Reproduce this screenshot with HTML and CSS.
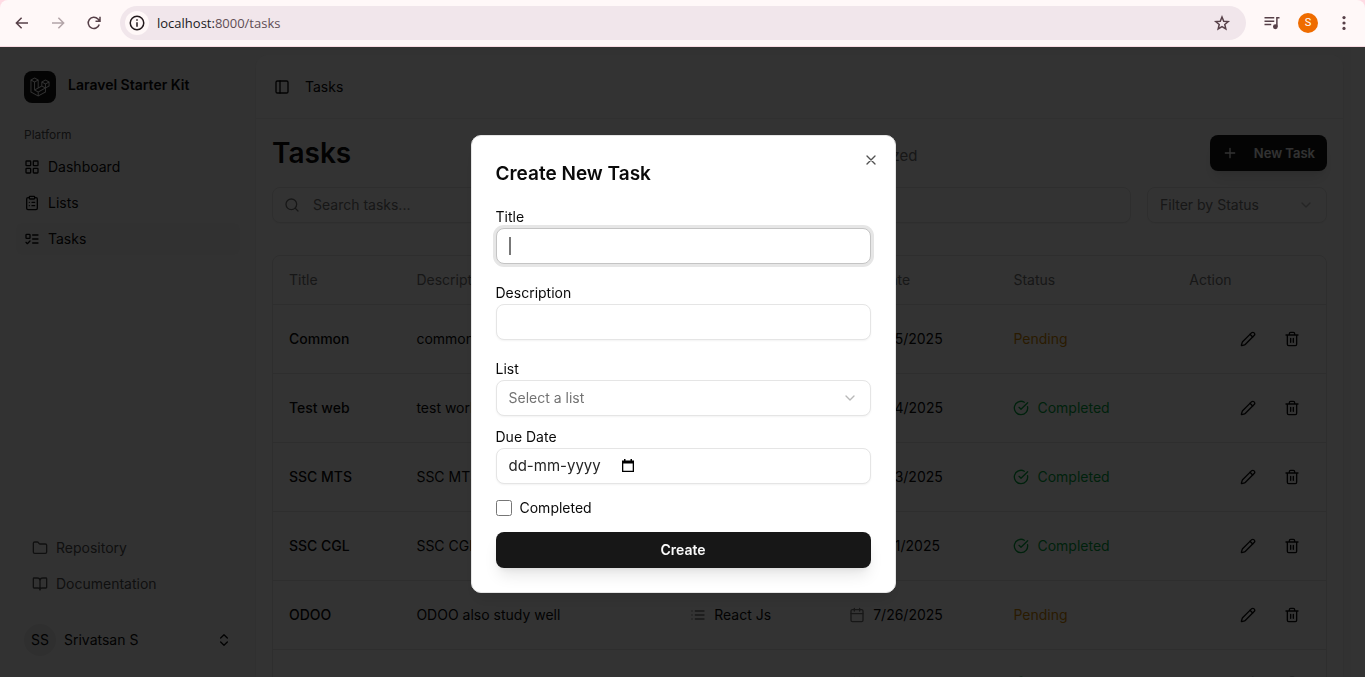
FILE: index.html
```html
<!DOCTYPE html>
<html lang="en">
<head>
<meta charset="utf-8">
<title>Tasks</title>
<link rel="stylesheet" href="styles.css">
</head>
<body>
<svg class="sprite" aria-hidden="true">
  <symbol id="pencil" viewBox="0 0 24 24"><path d="M21.174 6.812a1 1 0 0 0-3.986-3.987L3.842 16.174a2 2 0 0 0-.5.83l-1.321 4.352a.5.5 0 0 0 .623.622l4.353-1.32a2 2 0 0 0 .83-.497z"/><path d="m15 5 4 4"/></symbol>
  <symbol id="trash" viewBox="0 0 24 24"><path d="M3 6h18M19 6v14a2 2 0 0 1-2 2H7a2 2 0 0 1-2-2V6M8 6V4a2 2 0 0 1 2-2h4a2 2 0 0 1 2 2v2M10 11v6M14 11v6"/></symbol>
  <symbol id="list" viewBox="0 0 24 24"><path d="M3 12h.01M3 18h.01M3 6h.01M8 12h13M8 18h13M8 6h13"/></symbol>
  <symbol id="calendar" viewBox="0 0 24 24"><path d="M8 2v4M16 2v4M3 10h18"/><rect width="18" height="18" x="3" y="4" rx="2"/></symbol>
  <symbol id="check" viewBox="0 0 24 24"><path d="M21.801 10A10 10 0 1 1 17 3.335"/><path d="m9 11 3 3L22 4"/></symbol>
  <symbol id="chevron" viewBox="0 0 24 24"><path d="m6 9 6 6 6-6"/></symbol>
</svg>

<header class="browser">
  <div class="toolbar">
    <button class="tool" aria-label="Back"><svg class="bicon" viewBox="0 0 24 24"><path d="M20 12H5M11.500 5 4.500 12l7 7"/></svg></button>
    <button class="tool disabled" aria-label="Forward"><svg class="bicon" viewBox="0 0 24 24"><path d="M4 12h15M12.500 5l7 7-7 7"/></svg></button>
    <button class="tool" aria-label="Reload"><svg class="bicon" viewBox="0 0 24 24"><path d="M19 14a7.500 7.500 0 1 1-1.700-7.300L20 9.500M20 3.500v6h-6"/></svg></button>
    <div class="omnibox">
      <button class="siteinfo" aria-label="Site information"><svg class="bicon" viewBox="0 0 24 24"><circle cx="12" cy="12" r="9"/><path d="M12 11v6M12 7v2"/></svg></button>
      <span class="url"><b>localhost:</b>8000/tasks</span>
      <button class="tool" aria-label="Bookmark"><svg class="bicon" viewBox="0 0 24 24"><path d="m12 4 2.300 5.600 6 .5-4.600 3.900 1.400 5.900L12 16.800l-5.100 3.100 1.400-5.900-4.600-3.900 6-.5z"/></svg></button>
    </div>
    <button class="tool" aria-label="Media"><svg class="bicon" viewBox="0 0 24 24"><path d="M2 5h13M2 9.500h13M2 14h9M18.500 17V5H22"/><circle class="solid" cx="16.500" cy="17" r="2.200"/></svg></button>
    <button class="profile" aria-label="Profile">S</button>
    <button class="tool" aria-label="Menu"><svg class="dots" viewBox="0 0 20 20"><circle cx="10" cy="4" r="1.800"/><circle cx="10" cy="10" r="1.800"/><circle cx="10" cy="16" r="1.800"/></svg></button>
  </div>
</header>

<div class="page">
  <aside class="sidebar">
    <a class="brand" href="#">
      <span class="logo"><svg viewBox="0 0 40 42"><path fill-rule="evenodd" d="M17.2 5.633 8.6.855 0 5.633v26.51l16.2 9 16.2-9v-8.442l7.6-4.223V9.856l-8.6-4.777-8.6 4.777V18.3l-5.6 3.111V5.633ZM38 18.301l-5.6 3.11v-6.157l5.6-3.11V18.3Zm-1.06-7.856-5.54 3.078-5.54-3.079 5.54-3.078 5.54 3.079ZM24.8 18.3v-6.157l5.6 3.111v6.158L24.8 18.3Zm-1 1.732 5.54 3.078-13.14 7.302-5.54-3.078 13.14-7.3v-.002Zm-16.2 7.89 7.6 4.222V38.3L2 30.966V7.92l5.6 3.111v16.892ZM8.6 9.3 3.06 6.222 8.6 3.143l5.54 3.08L8.6 9.3Zm21.8 15.51-13.2 7.334V38.3l13.2-7.334v-6.156ZM9.6 11.034l5.6-3.11v14.6l-5.6 3.11v-14.6Z"/></svg></span>
      <span class="brandname">Laravel Starter Kit</span>
    </a>
    <p class="group">Platform</p>
    <nav class="nav">
      <a href="#"><svg class="icon" viewBox="0 0 24 24"><rect width="7" height="7" x="3" y="3" rx="1"/><rect width="7" height="7" x="14" y="3" rx="1"/><rect width="7" height="7" x="14" y="14" rx="1"/><rect width="7" height="7" x="3" y="14" rx="1"/></svg>Dashboard</a>
      <a href="#"><svg class="icon" viewBox="0 0 24 24"><rect width="8" height="4" x="8" y="2" rx="1"/><path d="M16 4h2a2 2 0 0 1 2 2v14a2 2 0 0 1-2 2H6a2 2 0 0 1-2-2V6a2 2 0 0 1 2-2h2M12 11h4M12 16h4M8 11h.01M8 16h.01"/></svg>Lists</a>
      <a class="active" href="#"><svg class="icon" viewBox="0 0 24 24"><rect x="3" y="5" width="6" height="6" rx="1"/><path d="m3 17 2 2 4-4M13 6h8M13 12h8M13 18h8"/></svg>Tasks</a>
    </nav>
    <nav class="nav links">
      <a href="#"><svg class="icon" viewBox="0 0 24 24"><path d="M20 20a2 2 0 0 0 2-2V8a2 2 0 0 0-2-2h-7.900a2 2 0 0 1-1.690-.9L9.600 3.900A2 2 0 0 0 7.930 3H4a2 2 0 0 0-2 2v13a2 2 0 0 0 2 2Z"/></svg>Repository</a>
      <a href="#"><svg class="icon" viewBox="0 0 24 24"><path d="M12 7v14M3 18a1 1 0 0 1-1-1V4a1 1 0 0 1 1-1h5a4 4 0 0 1 4 4 4 4 0 0 1 4-4h5a1 1 0 0 1 1 1v13a1 1 0 0 1-1 1h-6a3 3 0 0 0-3 3 3 3 0 0 0-3-3z"/></svg>Documentation</a>
    </nav>
    <button class="user"><span class="avatar">SS</span><span class="username">Srivatsan S</span><svg class="icon" viewBox="0 0 24 24"><path d="m7 15 5 5 5-5M7 9l5-5 5 5"/></svg></button>
  </aside>

  <main class="main">
    <div class="crumbs">
      <button class="plain" aria-label="Toggle sidebar"><svg class="icon" viewBox="0 0 24 24"><rect width="18" height="18" x="3" y="3" rx="2"/><path d="M9 3v18"/></svg></button>
      <span>Tasks</span>
    </div>
    <div class="content">
      <div class="heading">
        <h1>Tasks</h1>
        <p>Manage your tasks and stay organized</p>
        <button class="primary new"><svg class="icon" viewBox="0 0 24 24"><path d="M5 12h14M12 5v14"/></svg>New Task</button>
      </div>
      <div class="filters">
        <label class="search"><svg class="icon" viewBox="0 0 24 24"><circle cx="11" cy="11" r="8"/><path d="m21 21-4.300-4.300"/></svg><input type="search" placeholder="Search tasks..." aria-label="Search tasks"></label>
        <div class="selectbox status-filter"><select aria-label="Filter by Status"><option>Filter by Status</option></select><svg class="icon faint"><use href="#chevron"/></svg></div>
      </div>
      <div class="tablebox">
        <table>
          <colgroup><col class="c-title"><col class="c-desc"><col class="c-list"><col class="c-due"><col class="c-status"><col class="c-action"></colgroup>
          <thead><tr><th>Title</th><th>Description</th><th>List</th><th>Due Date</th><th>Status</th><th>Action</th></tr></thead>
          <tbody>
            <tr><td class="name">Common</td><td>common</td><td></td><td><span class="cell"><svg class="icon muted"><use href="#calendar"/></svg>7/25/2025</span></td><td><span class="pending">Pending</span></td><td><span class="actions"><button class="plain" aria-label="Edit"><svg class="icon"><use href="#pencil"/></svg></button><button class="plain" aria-label="Delete"><svg class="icon"><use href="#trash"/></svg></button></span></td></tr>
            <tr><td class="name">Test web</td><td>test work</td><td></td><td><span class="cell"><svg class="icon muted"><use href="#calendar"/></svg>7/24/2025</span></td><td><span class="cell done"><svg class="icon"><use href="#check"/></svg>Completed</span></td><td><span class="actions"><button class="plain" aria-label="Edit"><svg class="icon"><use href="#pencil"/></svg></button><button class="plain" aria-label="Delete"><svg class="icon"><use href="#trash"/></svg></button></span></td></tr>
            <tr><td class="name">SSC MTS</td><td>SSC MTS</td><td></td><td><span class="cell"><svg class="icon muted"><use href="#calendar"/></svg>7/23/2025</span></td><td><span class="cell done"><svg class="icon"><use href="#check"/></svg>Completed</span></td><td><span class="actions"><button class="plain" aria-label="Edit"><svg class="icon"><use href="#pencil"/></svg></button><button class="plain" aria-label="Delete"><svg class="icon"><use href="#trash"/></svg></button></span></td></tr>
            <tr><td class="name">SSC CGL</td><td>SSC CGL</td><td></td><td><span class="cell"><svg class="icon muted"><use href="#calendar"/></svg>7/31/2025</span></td><td><span class="cell done"><svg class="icon"><use href="#check"/></svg>Completed</span></td><td><span class="actions"><button class="plain" aria-label="Edit"><svg class="icon"><use href="#pencil"/></svg></button><button class="plain" aria-label="Delete"><svg class="icon"><use href="#trash"/></svg></button></span></td></tr>
            <tr><td class="name">ODOO</td><td>ODOO also study well</td><td><span class="cell"><svg class="icon muted"><use href="#list"/></svg>React Js</span></td><td><span class="cell"><svg class="icon muted"><use href="#calendar"/></svg>7/26/2025</span></td><td><span class="pending">Pending</span></td><td><span class="actions"><button class="plain" aria-label="Edit"><svg class="icon"><use href="#pencil"/></svg></button><button class="plain" aria-label="Delete"><svg class="icon"><use href="#trash"/></svg></button></span></td></tr>
            <tr><td></td><td></td><td></td><td><span class="cell"><svg class="icon muted"><use href="#calendar"/></svg></span></td><td><span class="cell done"><svg class="icon"><use href="#check"/></svg></span></td><td><span class="actions"><button class="plain" aria-label="Edit"><svg class="icon"><use href="#pencil"/></svg></button><button class="plain" aria-label="Delete"><svg class="icon"><use href="#trash"/></svg></button></span></td></tr>
          </tbody>
        </table>
      </div>
    </div>
  </main>
  <div class="gutter"></div>
</div>

<div class="overlay">
  <section class="dialog" role="dialog" aria-labelledby="dialog-title">
    <h2 id="dialog-title">Create New Task</h2>
    <button class="plain close" aria-label="Close"><svg class="icon" viewBox="0 0 24 24"><path d="M18 6 6 18M6 6l12 12"/></svg></button>
    <form>
      <div class="field roomy"><label for="title">Title</label><input class="control focused" id="title" type="text"></div>
      <div class="field roomy"><label for="description">Description</label><input class="control" id="description" type="text"></div>
      <div class="field"><label for="list">List</label><div class="selectbox"><select id="list"><option>Select a list</option></select><svg class="icon faint"><use href="#chevron"/></svg></div></div>
      <div class="field"><label for="due">Due Date</label><div class="control date"><input id="due" type="text" placeholder="dd-mm-yyyy" size="9"><button class="plain" type="button" aria-label="Open calendar"><svg class="picker" viewBox="0 0 14 14"><path fill-rule="evenodd" d="M3 0h1.500v1.500h5V0H11v1.500h2V13H1V1.500h2zM2.300 4.500v7.200h9.400V4.500z"/></svg></button></div></div>
      <div class="checkrow"><input id="completed" type="checkbox"><label for="completed">Completed</label></div>
      <button class="primary" type="button">Create</button>
    </form>
  </section>
</div>
</body>
</html>
```
FILE: styles.css
```css
* { box-sizing: border-box; }
body {
  margin: 0;
  height: 100vh;
  display: flex;
  flex-direction: column;
  overflow: hidden;
  font-family: Inter, "Liberation Sans", sans-serif;
  font-size: 14px;
  line-height: 20px;
  color: #0a0a0a;
}
h1, h2, p { margin: 0; }
a { color: inherit; text-decoration: none; }
button, input, select { font: inherit; color: inherit; }
button { border: 0; padding: 0; background: none; }
.sprite { display: none; }
.icon {
  width: 16px;
  height: 16px;
  flex: none;
  fill: none;
  stroke: currentColor;
  stroke-width: 2;
  stroke-linecap: round;
  stroke-linejoin: round;
}
.muted { color: #737373; }
.faint { opacity: 0.5; }
.plain { display: flex; }

/* Browser toolbar */
.browser { flex: none; background: #ffdbe4; border-bottom: 1px solid #f8dbe2; }
.toolbar {
  display: flex;
  align-items: center;
  gap: 16px;
  height: 46px;
  padding: 0 11px 0 12px;
  background: #fff8f8;
  border-radius: 8px 8px 0 0;
  color: #574048;
}
.tool { display: flex; justify-content: center; width: 20px; flex: none; }
.disabled { opacity: 0.45; }
.bicon {
  width: 18px;
  height: 18px;
  fill: none;
  stroke: currentColor;
  stroke-width: 2;
}
.solid { fill: currentColor; }
.dots { width: 18px; height: 18px; fill: currentColor; }
.omnibox {
  flex: 1;
  display: flex;
  align-items: center;
  gap: 8px;
  height: 34px;
  padding: 0 14px 0 5px;
  border-radius: 17px;
  background: #f1e6eb;
}
.siteinfo {
  display: flex;
  align-items: center;
  justify-content: center;
  width: 24px;
  height: 24px;
  border-radius: 50%;
  background: #fff8f8;
  color: #22191c;
}
.url { flex: 1; font-family: "Open Sans", sans-serif; font-size: 13px; color: #604d54; }
.url b { font-weight: 400; color: #201a1c; }
.profile {
  width: 20px;
  height: 20px;
  border-radius: 50%;
  background: #ef6c00;
  color: #fff;
  font-family: Roboto, sans-serif;
  font-size: 11px;
}

/* App shell */
.page { flex: 1; min-height: 0; display: flex; background: #fafafa; }
.sidebar {
  flex: none;
  width: 256px;
  padding: 16px;
  display: flex;
  flex-direction: column;
}
.brand { display: flex; gap: 12px; padding: 8px; }
.logo {
  display: flex;
  align-items: center;
  justify-content: center;
  width: 32px;
  height: 32px;
  border-radius: 8px;
  background: #171717;
}
.logo svg { width: 20px; height: 20px; fill: #fff; }
.brandname { font-weight: 600; font-size: 14px; line-height: 28px; white-space: nowrap; }
.group {
  padding: 0 8px;
  margin-top: 8px;
  line-height: 32px;
  font-size: 12px;
  color: #505050;
}
.nav { display: flex; flex-direction: column; gap: 4px; }
.nav a {
  display: flex;
  align-items: center;
  gap: 8px;
  height: 32px;
  padding: 0 8px;
  border-radius: 6px;
}
.nav .active { background: #f5f5f5; }
.links { margin-top: auto; padding: 0 8px; color: #525252; }
.user {
  display: flex;
  align-items: center;
  gap: 8px;
  height: 48px;
  margin: 16px 0 -3px;
  padding: 0 8px;
  text-align: left;
}
.avatar {
  width: 32px;
  line-height: 32px;
  border-radius: 50%;
  background: #eaeaea;
  text-align: center;
}
.username { flex: 1; }
.main {
  flex: 1;
  min-width: 0;
  margin: 8px 8px 0 0;
  overflow: hidden;
  background: #fff;
  border-radius: 12px 12px 0 0;
  box-shadow: 0 1px 3px #0000001a;
}
.gutter { flex: none; width: 14px; background: #fcfcfc; }
.crumbs {
  display: flex;
  align-items: center;
  gap: 15px;
  height: 64px;
  padding: 0 18px;
  border-bottom: 1px solid #ededed;
}
.content { padding: 16px; }
.heading { display: flex; justify-content: space-between; height: 36px; }
.heading h1 { font-size: 28px; line-height: 36px; font-weight: 600; }
.heading p { font-size: 15px; line-height: 42px; color: #737373; }
.primary {
  height: 36px;
  border-radius: 8px;
  background: #171717;
  color: #fafafa;
  font-weight: 600;
  box-shadow: 0 10px 15px -3px #0000001a, 0 4px 6px -4px #0000001a;
}
.new { display: flex; align-items: center; gap: 16px; padding: 0 12px; font-size: 13px; }
.filters { display: flex; gap: 16px; margin: 16px 0 32px; }
.search, .control, .selectbox {
  height: 36px;
  border: 1px solid #e5e5e5;
  border-radius: 8px;
  background: #fff;
  box-shadow: 0 1px 2px #0000000d;
}
.search { flex: 1; display: flex; align-items: center; gap: 13px; padding: 0 11px; color: #737373; }
.search input { flex: 1; border: 0; padding: 0; outline: 0; background: none; }
input::placeholder { color: #737373; opacity: 1; }
.selectbox { display: grid; align-items: center; color: #737373; }
.selectbox > * { grid-area: 1 / 1; }
.selectbox select {
  appearance: none;
  width: 100%;
  height: 34px;
  padding: 0 12px;
  border: 0;
  background: none;
}
.selectbox .icon { justify-self: end; margin-right: 12px; pointer-events: none; }
.status-filter { width: 180px; }
.tablebox { border: 1px solid #e5e5e5; border-radius: 8px; }
table { width: 100%; table-layout: fixed; border-collapse: collapse; text-align: left; }
.c-title { width: 12.1%; }
.c-desc { width: 26%; }
.c-list { width: 15.1%; }
.c-due { width: 15.6%; }
.c-status { width: 16.7%; }
.c-action { width: 14.5%; }
th { height: 48px; padding: 0 16px; font-weight: 400; color: #737373; border-bottom: 1px solid #e5e5e5; }
td { height: 69px; padding: 0 16px; border-bottom: 1px solid #e5e5e5; }
.name { font-weight: 500; }
.cell { display: flex; align-items: center; gap: 8px; }
.pending { color: #d08700; }
.done { color: #00a63e; }
.actions { display: flex; justify-content: flex-end; gap: 28px; padding-right: 10px; }

/* Dialog */
.overlay {
  position: fixed;
  inset: 47px 0 0;
  display: grid;
  place-content: center;
  padding: 4px 0 0 1px;
  background: #000c;
}
.dialog {
  position: relative;
  width: 425px;
  max-width: 100vw;
  padding: 24px;
  border: 1px solid #e5e5e5;
  border-radius: 10px;
  background: #fff;
  box-shadow: 0 10px 15px -3px #0000001a;
}
.dialog h2 { font-size: 19px; line-height: 28px; font-weight: 600; }
.close { position: absolute; top: 16px; right: 16px; opacity: 0.7; }
.dialog form { display: flex; flex-direction: column; margin-top: 18px; }
.field { display: flex; flex-direction: column; margin-bottom: 10px; }
.roomy { margin-bottom: 18px; }
.field label { line-height: 22px; }
.control { padding: 0 12px; outline: 0; }
.focused {
  border-color: #c4c4c4;
  box-shadow: 0 0 0 3px #e6e6e6;
  background: linear-gradient(#777, #777) 12px center / 2px 18px no-repeat #fff;
  caret-color: transparent;
}
.date { display: flex; align-items: center; gap: 12px; }
.date input { width: 100px; border: 0; padding: 0; outline: 0; background: none; font-size: 15px; }
.date input::placeholder { color: #262626; }
.picker { width: 14px; height: 14px; }
.checkrow { display: flex; align-items: center; gap: 8px; height: 16px; margin: 6px 0 16px; }
.checkrow input { width: 16px; height: 16px; margin: 0; }
```
